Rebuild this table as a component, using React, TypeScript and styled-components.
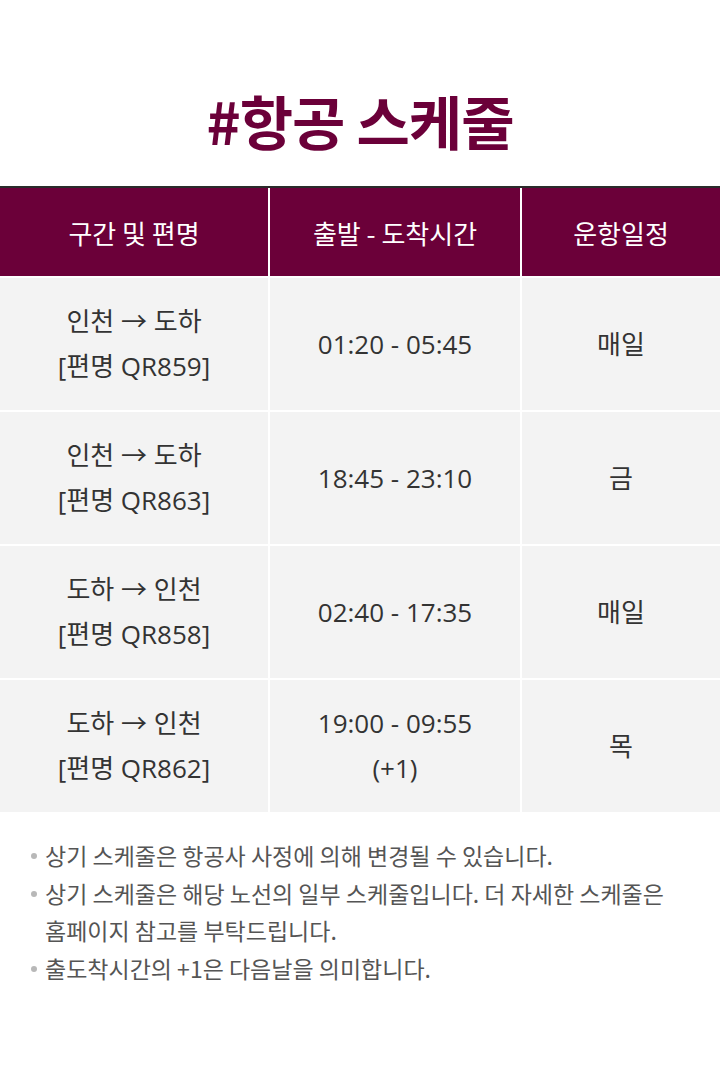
import React from 'react';
import styled, { createGlobalStyle } from 'styled-components';

const GlobalStyle = createGlobalStyle`
  html, body {
    margin: 0;
    padding: 0;
    background: #ffffff;
  }
  body {
    font-family: "Noto Sans CJK KR", "Noto Sans", sans-serif;
  }
`;

const Page = styled.div`
  width: 720px;
  min-height: 1080px;
  background: #ffffff;
`;

const Title = styled.h1`
  margin: 0;
  padding: 80px 0 26px;
  text-align: center;
  font-size: 58px;
  line-height: 80px;
  font-weight: 700;
  letter-spacing: -1px;
  color: #6b0039;
`;

const Table = styled.div`
  border-top: 2px solid #2b2b2b;
  display: grid;
  grid-template-columns: 268px 250px 198px;
  column-gap: 2px;
  row-gap: 2px;
  background: #ffffff;
`;

const HeadCell = styled.div`
  height: 88px;
  background: #6b0039;
  color: #ffffff;
  display: flex;
  align-items: center;
  justify-content: center;
  font-size: 26px;
`;

const Cell = styled.div`
  height: 132px;
  background: #f3f3f3;
  color: #333333;
  display: flex;
  flex-direction: column;
  align-items: center;
  justify-content: center;
  text-align: center;
  font-family: "Open Sans", "Noto Sans CJK KR", sans-serif;
  font-size: 26px;
  line-height: 45px;
`;

const Notes = styled.ul`
  list-style: none;
  margin: 0;
  padding: 25px 16px 0 45px;
`;

const Note = styled.li`
  position: relative;
  font-size: 23px;
  line-height: 37.5px;
  color: #555555;

  &::before {
    content: '';
    position: absolute;
    left: -14px;
    top: 16px;
    width: 6px;
    height: 6px;
    border-radius: 50%;
    background: #b8b8b8;
  }
`;

type Flight = { route: string; flight: string; time: string[]; days: string };

const flights: Flight[] = [
  { route: '인천 → 도하', flight: '[편명 QR859]', time: ['01:20 - 05:45'], days: '매일' },
  { route: '인천 → 도하', flight: '[편명 QR863]', time: ['18:45 - 23:10'], days: '금' },
  { route: '도하 → 인천', flight: '[편명 QR858]', time: ['02:40 - 17:35'], days: '매일' },
  { route: '도하 → 인천', flight: '[편명 QR862]', time: ['19:00 - 09:55', '(+1)'], days: '목' },
];

const notes = [
  ['상기 스케줄은 항공사 사정에 의해 변경될 수 있습니다.'],
  ['상기 스케줄은 해당 노선의 일부 스케줄입니다. 더 자세한 스케줄은', '홈페이지 참고를 부탁드립니다.'],
  ['출도착시간의 +1은 다음날을 의미합니다.'],
];

export default function App() {
  return (
    <>
      <GlobalStyle />
      <Page>
        <Title>#항공 스케줄</Title>
        <Table>
          <HeadCell>구간 및 편명</HeadCell>
          <HeadCell>출발 - 도착시간</HeadCell>
          <HeadCell>운항일정</HeadCell>
          {flights.map((f) => (
            <React.Fragment key={f.flight}>
              <Cell>
                <span>{f.route}</span>
                <span>{f.flight}</span>
              </Cell>
              <Cell>
                {f.time.map((t) => (
                  <span key={t}>{t}</span>
                ))}
              </Cell>
              <Cell>{f.days}</Cell>
            </React.Fragment>
          ))}
        </Table>
        <Notes>
          {notes.map((lines) => (
            <Note key={lines[0]}>
              {lines.map((l, i) => (
                <React.Fragment key={l}>
                  {i > 0 && <br />}
                  {l}
                </React.Fragment>
              ))}
            </Note>
          ))}
        </Notes>
      </Page>
    </>
  );
}
